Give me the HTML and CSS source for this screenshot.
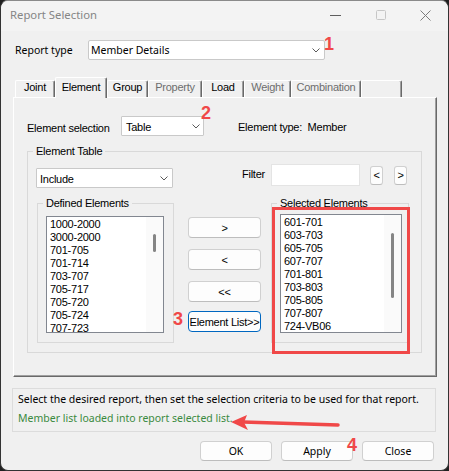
FILE: index.html
```html
<!DOCTYPE html>
<html lang="en">
<head>
    <meta charset="UTF-8">
    <title>Report Selection</title>
    <link rel="stylesheet" href="styles.css">
</head>
<body>
    <div class="window">
        <div class="titlebar">
            <span class="title">Report Selection</span>
            <div class="controls">
                <span class="ctl"><svg width="11" height="1"><rect width="11" height="1" fill="#5e5e5e"/></svg></span>
                <span class="ctl"><svg width="10" height="10"><rect x="0.5" y="0.5" width="9" height="9" rx="1" fill="none" stroke="#c6c6c6"/></svg></span>
                <span class="ctl"><svg width="11" height="11"><path d="M0.5 0.5 L10.5 10.5 M10.5 0.5 L0.5 10.5" stroke="#7c7c7c" stroke-width="1"/></svg></span>
            </div>
        </div>

        <div class="dialog">
            <div class="report-row">
                <span class="report-label">Report type</span>
                <div class="combo combo-report">
                    <span class="combo-text">Member Details</span>
                    <svg class="chev" width="8" height="5"><polyline points="0.5,0.5 4,4 7.5,0.5" fill="none" stroke="#5a5a5a"/></svg>
                </div>
            </div>

            <div class="tabs">
                <span class="tab w-joint">Joint</span>
                <span class="tab active w-element">Element</span>
                <span class="tab w-group">Group</span>
                <span class="tab off w-property">Property</span>
                <span class="tab w-load">Load</span>
                <span class="tab off w-weight">Weight</span>
                <span class="tab off w-comb">Combination</span>
                <span class="tab w-empty"></span>
            </div>

            <div class="panel">
                <div class="sel-row">
                    <span class="sel-label">Element selection</span>
                    <div class="combo combo-ms combo-table">
                        <span class="combo-text">Table</span>
                        <svg class="chev" width="8" height="5"><polyline points="0.5,0.5 4,4 7.5,0.5" fill="none" stroke="#5a5a5a"/></svg>
                    </div>
                    <span class="etype">Element type:&nbsp; Member</span>
                </div>

                <fieldset class="group etable">
                    <legend>Element Table</legend>
                    <div class="filter-row">
                        <div class="combo combo-ms combo-include">
                            <span class="combo-text">Include</span>
                            <svg class="chev" width="8" height="5"><polyline points="0.5,0.5 4,4 7.5,0.5" fill="none" stroke="#5a5a5a"/></svg>
                        </div>
                        <span class="filter-label">Filter</span>
                        <div class="textbox"></div>
                        <button class="btn mini">&lt;</button>
                        <button class="btn mini mini-next">&gt;</button>
                    </div>

                    <div class="lists">
                        <fieldset class="group defined">
                            <legend>Defined Elements</legend>
                            <div class="listbox list-defined">
                                <div class="items">
                                    <div>1000-2000</div>
                                    <div>3000-2000</div>
                                    <div>701-705</div>
                                    <div>701-714</div>
                                    <div>703-707</div>
                                    <div>705-717</div>
                                    <div>705-720</div>
                                    <div>705-724</div>
                                    <div>707-723</div>
                                </div>
                                <div class="scroll"><div class="thumb thumb-defined"></div></div>
                            </div>
                        </fieldset>

                        <div class="move-btns">
                            <button class="btn move">&gt;</button>
                            <button class="btn move">&lt;</button>
                            <button class="btn move">&lt;&lt;</button>
                            <button class="btn move focused">Element List&gt;&gt;</button>
                        </div>

                        <fieldset class="group selected">
                            <legend>Selected Elements</legend>
                            <div class="listbox list-selected">
                                <div class="items">
                                    <div>601-701</div>
                                    <div>603-703</div>
                                    <div>605-705</div>
                                    <div>607-707</div>
                                    <div>701-801</div>
                                    <div>703-803</div>
                                    <div>705-805</div>
                                    <div>707-807</div>
                                    <div>724-VB06</div>
                                </div>
                                <div class="scroll"><div class="thumb thumb-selected"></div></div>
                            </div>
                        </fieldset>
                    </div>
                </fieldset>
            </div>

            <div class="status">
                <div>Select the desired report, then set the selection criteria to be used for that report.</div>
                <div class="status-ok">Member list loaded into report selected list.</div>
            </div>

            <div class="actions">
                <button class="btn action">OK</button>
                <button class="btn action">Apply</button>
                <button class="btn action">Close</button>
            </div>
        </div>

        <!-- annotations drawn over the dialog -->
        <span class="mark mark-1">1</span>
        <span class="mark mark-2">2</span>
        <span class="mark mark-3">3</span>
        <span class="mark mark-4">4</span>
        <div class="highlight"></div>
        <svg class="arrow" width="120" height="25">
            <line x1="18" y1="12" x2="113" y2="15" stroke="#f04848" stroke-width="3.5" stroke-linecap="round"/>
            <polygon points="6,12 22,5 19,12.5 23,20" fill="#f04848"/>
        </svg>
    </div>
</body>
</html>
```

FILE: styles.css
```css
* {
    box-sizing: border-box;
}

body {
    margin: 0;
    background-color: #202020;
    font-family: "Liberation Sans", Arial, sans-serif;
    font-size: 11px;
    letter-spacing: -0.25px;
    color: #000;
}

.window {
    position: relative;
    width: 449px;
    height: 471px;
    border: 1px solid #333;
    border-top-color: #8a8a8a;
    border-radius: 8px;
    overflow: hidden;
    background-color: #f0f0f0;
    display: flex;
    flex-direction: column;
}

/* title bar */

.titlebar {
    height: 30px;
    background-color: #f3f3f3;
    display: flex;
    align-items: flex-start;
}

.title {
    padding: 6px 0 0 9px;
    font-family: "Noto Sans", sans-serif;
    font-size: 11.3px;
    line-height: 16px;
    letter-spacing: 0;
    color: #858585;
}

.controls {
    margin-left: auto;
    display: flex;
    height: 28px;
}

.ctl {
    width: 45px;
    display: flex;
    align-items: center;
    justify-content: center;
}

.dialog {
    flex: 1;
    padding: 0 11px;
}

/* report type */

.report-row {
    display: flex;
    align-items: center;
    margin-top: 9px;
    padding-left: 3px;
    font-family: "Noto Sans", sans-serif;
    font-size: 10.5px;
    letter-spacing: 0;
}

.report-label {
    width: 73px;
    line-height: 18px;
}

.combo {
    height: 20px;
    background-color: #fff;
    border: 1px solid #c9c9c9;
    border-radius: 2px;
    display: flex;
    align-items: center;
    justify-content: space-between;
}

.combo-report {
    width: 237px;
    padding: 0 4px 0 2px;
    line-height: 18px;
}

.combo-ms {
    padding: 0 3px 0 3px;
    border-radius: 1px;
}

.combo-ms .combo-text {
    line-height: 13px;
    margin-top: 2px;
}

.combo-table {
    width: 83px;
    padding-left: 4px;
}

.combo-include {
    width: 137px;
    margin-top: 4px;
    padding-right: 4px;
}

.chev {
    display: block;
}

/* tabs */

.tabs {
    display: flex;
    align-items: flex-end;
    height: 20px;
    margin-top: 17px;
    padding-left: 3px;
}

.tab {
    height: 17px;
    border-top: 1px solid #fff;
    border-left: 1px solid #fff;
    border-right: 1px solid #696969;
    border-radius: 2px 2px 0 0;
    box-shadow: inset -1px 0 #a0a0a0;
    background-color: #f0f0f0;
    text-align: center;
    line-height: 12px;
}

.tab.active {
    position: relative;
    z-index: 1;
    height: 21px;
    margin-bottom: -1px;
    padding-top: 3px;
    line-height: 13px;
}

.tab.off {
    color: #6d6d6d;
}

.w-joint { width: 40px; }
.w-element { width: 52px; }
.w-group { width: 41px; }
.w-property { width: 54px; }
.w-load { width: 42px; }
.w-weight { width: 47px; }
.w-comb { width: 70px; }
.w-empty { width: 41px; }

.panel {
    margin-left: 1px;
    width: 424px;
    height: 280px;
    border-top: 1px solid #fff;
    border-left: 1px solid #fff;
    border-right: 1px solid #696969;
    border-bottom: 1px solid #696969;
    box-shadow: inset -1px -1px 0 #a0a0a0;
    padding: 18px 0 0 13px;
}

.sel-row {
    display: flex;
    align-items: flex-start;
    height: 20px;
    line-height: 13px;
}

.sel-label {
    width: 94px;
    padding-top: 6px;
}

.etype {
    margin-left: 34px;
    padding-top: 5px;
}

/* group boxes */

.group {
    margin: 0;
    min-width: 0;
    border: 1px solid #d9d9d9;
}

.group legend {
    margin-left: -3px;
    padding: 0 3px;
    line-height: 14px;
}

.etable {
    width: 395px;
    margin-top: 8px;
    padding: 6px 8px 9px 8px;
}

.filter-row {
    display: flex;
    align-items: flex-start;
    height: 24px;
}

.filter-label {
    width: 29px;
    margin-left: 69px;
    padding-top: 3px;
    line-height: 14px;
}

.textbox {
    width: 89px;
    height: 22px;
    background-color: #fff;
    border: 1px solid #e4e4e4;
}

.btn {
    padding: 0;
    font-family: inherit;
    font-size: 11px;
    letter-spacing: -0.25px;
    color: #000;
    background-color: #fdfdfd;
    border: 1px solid #d0d0d0;
    border-bottom-color: #bdbdbd;
    border-radius: 4px;
}

.mini {
    width: 13px;
    height: 19px;
    margin: 2px 0 0 10px;
    border-radius: 3px;
    line-height: 15px;
}

.mini-next {
    margin-left: 11px;
}

.lists {
    display: flex;
    align-items: flex-start;
    margin-top: 8px;
}

.defined {
    width: 137px;
    margin-left: 1px;
    padding: 6px 9px 9px 8px;
}

.selected {
    width: 138px;
    margin-left: 10px;
    padding: 4px 6px 9px 8px;
}

.listbox {
    display: flex;
    background-color: #fff;
    border: 1px solid #828790;
}

.list-defined {
    width: 118px;
    height: 117px;
}

.list-selected {
    width: 122px;
    height: 119px;
}

.items {
    flex: 1;
    overflow: hidden;
    padding: 1px 0 0 3px;
    line-height: 13px;
}

.scroll {
    width: 17px;
    background-color: #fafafa;
}

.thumb {
    width: 3px;
    margin-left: 7px;
    border-radius: 2px;
    background-color: #858585;
}

.thumb-defined {
    height: 18px;
    margin-top: 17px;
}

.thumb-selected {
    height: 65px;
    margin-top: 18px;
}

.move-btns {
    display: flex;
    flex-direction: column;
    width: 73px;
    margin-left: 14px;
    padding-top: 21px;
}

.move {
    height: 21px;
    margin-bottom: 11px;
}

.move:nth-child(3) {
    margin-bottom: 9px;
}

.move.focused {
    border-color: #0067c0;
}

/* status + buttons */

.status {
    width: 424px;
    height: 44px;
    margin-top: 11px;
    padding: 1px 0 0 5px;
    border: 1px solid #dcdcdc;
    font-family: "Noto Sans", sans-serif;
    font-size: 10.5px;
    letter-spacing: 0;
    line-height: 19px;
}

.status-ok {
    color: #3a8a3e;
}

.actions {
    display: flex;
    justify-content: flex-end;
    gap: 9px;
    margin-top: 9px;
    padding-right: 3px;
}

.action {
    width: 72px;
    height: 20px;
    font-family: "Noto Sans", sans-serif;
    font-size: 10.5px;
    letter-spacing: 0;
}

/* red annotations */

.mark {
    position: absolute;
    font-family: "Liberation Sans", Arial, sans-serif;
    font-weight: bold;
    font-size: 18px;
    line-height: 18px;
    letter-spacing: 0;
    color: #f04848;
}

.mark-1 { left: 323px; top: 34px; }
.mark-2 { left: 200px; top: 103px; }
.mark-3 { left: 172px; top: 309px; }
.mark-4 { left: 346px; top: 435px; }

.highlight {
    position: absolute;
    left: 271px;
    top: 206px;
    width: 138px;
    height: 147px;
    border: 3px solid #f04848;
}

.arrow {
    position: absolute;
    left: 224px;
    top: 409px;
}
```
